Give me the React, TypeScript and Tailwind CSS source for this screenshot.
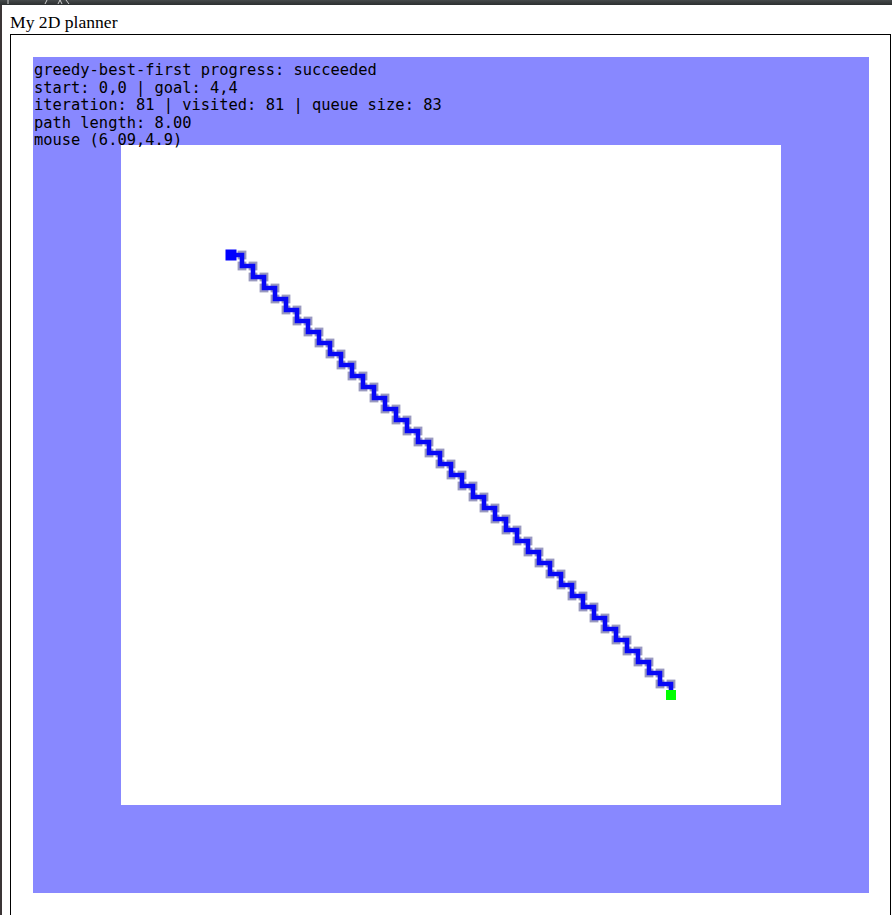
import React from 'react';

/* ── Planner data ───────────────────────────────────────────────────────────── */

const SCALE = 110; // px per world unit
const ORIGIN = 110; // world (0,0) inside the white square
const STEP = 0.1;
const STEPS = 40;

// greedy path: right, down, right, down ... from (0,0) to (4,4)
function buildPath(): [number, number][] {
  const pts: [number, number][] = [[0, 0]];
  let x = 0;
  let y = 0;
  for (let i = 0; i < STEPS; i++) {
    x += STEP;
    pts.push([x, y]);
    y += STEP;
    pts.push([x, y]);
  }
  return pts;
}

const path = buildPath();
const toPx = (v: number) => ORIGIN + v * SCALE;

const info = [
  'greedy-best-first progress: succeeded',
  'start: 0,0 | goal: 4,4',
  'iteration: 81 | visited: 81 | queue size: 83',
  'path length: 8.00',
  'mouse (6.09,4.9)',
];

/* ── Canvas ─────────────────────────────────────────────────────────────────── */

function PlannerCanvas() {
  const d = path
    .map(([x, y], i) => `${i === 0 ? 'M' : 'L'}${toPx(x).toFixed(1)} ${toPx(y).toFixed(1)}`)
    .join(' ');
  const goal = path[path.length - 1];

  return (
    <div className="relative w-[836px] h-[836px] bg-[#8888ff] p-[88px]">
      <div className="relative w-[660px] h-[660px] bg-white">
        <svg width={660} height={660} className="absolute left-0 top-0">
          {path.map(([x, y], i) => (
            <rect
              key={i}
              x={toPx(x) - 4.4}
              y={toPx(y) - 4.4}
              width={8.8}
              height={8.8}
              fill="#9a9abf"
            />
          ))}
          <path d={d} fill="none" stroke="#0808f6" strokeWidth={4.6} strokeLinejoin="miter" />
          <rect x={toPx(0) - 5.5} y={toPx(0) - 5.5} width={11} height={11} fill="#0000ff" />
          <rect x={toPx(goal[0]) - 5} y={toPx(goal[1]) - 5} width={10} height={10} fill="#00ff00" />
        </svg>
      </div>
      <pre className="absolute left-[1px] top-[5px] m-0 font-['DejaVu_Sans_Mono',monospace] text-[15.4px] leading-[17.6px] text-black">
        {info.join('\n')}
      </pre>
    </div>
  );
}

/* ── App ────────────────────────────────────────────────────────────────────── */

export default function App() {
  return (
    <div className="h-[915px] w-[892px] overflow-hidden bg-white">
      <div className="relative h-[5px] bg-gradient-to-b from-[#45494a] to-[#2c2f30]">
        <svg width={80} height={5} className="absolute left-0 top-0">
          <line x1={8} y1={0} x2={8} y2={4} stroke="#cfcfcf" strokeWidth={1} />
          <line x1={47} y1={0} x2={45} y2={4} stroke="#cfcfcf" strokeWidth={1} />
          <path d="M58 4 L60 0 L62 4 M66 0 L69 4" stroke="#cfcfcf" strokeWidth={1} fill="none" />
        </svg>
      </div>
      <div className="flex h-full">
        <div className="w-[2px] shrink-0 bg-[#3b3536]" />
        <div className="pl-[8px] pt-[7px]">
          <h1 className="m-0 font-['Liberation_Serif',serif] text-[17.6px] font-normal leading-[20px] text-black">
            My 2D planner
          </h1>
          <div className="mt-[2px] w-[881px] border border-black pl-[22px] pr-[21px] py-[22px]">
            <PlannerCanvas />
          </div>
        </div>
      </div>
    </div>
  );
}
